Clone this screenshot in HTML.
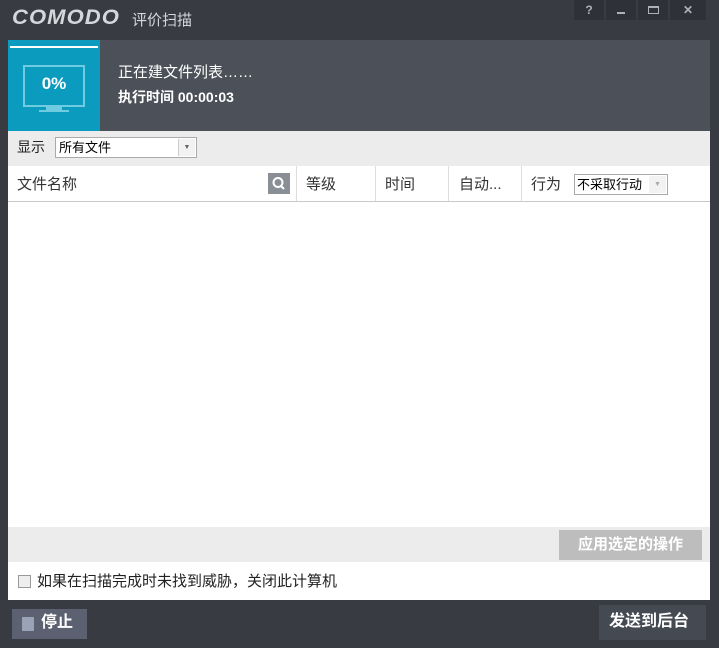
<!DOCTYPE html>
<html><head><meta charset="utf-8"><style>
*{margin:0;padding:0;box-sizing:border-box}
body{width:719px;height:648px;background:#383b42;font-family:"Liberation Sans","Noto Sans CJK SC",sans-serif;position:relative;overflow:hidden}
.a{position:absolute}
.wb{position:absolute;top:0;height:20px;background:#2e3137;color:#aeb1b6;font-size:12px;text-align:center;line-height:20px;font-weight:bold}
</style></head><body>
<div class="a" style="left:12px;top:6px;font-size:21px;font-weight:bold;font-style:italic;color:#d5d7db;letter-spacing:1px;transform:scaleX(1.05);transform-origin:left">COMODO</div>
<div class="a" style="left:132px;top:9px;font-size:15px;color:#d5d7db">评价扫描</div>
<div class="wb" style="left:574px;width:30px">?</div>
<div class="wb" style="left:606px;width:30px"><div style="margin:12px auto 0;width:8px;height:2px;background:#aeb1b6"></div></div>
<div class="wb" style="left:638px;width:30px"><div style="margin:6px auto 0;width:11px;height:8px;border:1px solid #aeb1b6;border-top-width:2px"></div></div>
<div class="wb" style="left:670px;width:36px">✕</div>
<div class="a" style="left:8px;top:40px;width:702px;height:91px;background:#4c5059"></div>
<div class="a" style="left:8px;top:40px;width:92px;height:91px;background:#0a9bbf"></div>
<div class="a" style="left:10px;top:46px;width:88px;height:2px;background:#fff"></div>
<div class="a" style="left:23px;top:65px;width:62px;height:42px;border:2px solid #6ecbe0"></div>
<div class="a" style="left:46px;top:107px;width:16px;height:3px;background:#6ecbe0"></div>
<div class="a" style="left:39px;top:110px;width:30px;height:2px;background:#6ecbe0"></div>
<div class="a" style="left:23px;top:74px;width:62px;text-align:center;color:#fff;font-weight:bold;font-size:17px">0%</div>
<div class="a" style="left:118px;top:61px;color:#fff;font-size:15px">正在建文件列表……</div>
<div class="a" style="left:118px;top:87px;color:#fff;font-size:14px;font-weight:bold">执行时间 00:00:03</div>
<div class="a" style="left:8px;top:131px;width:702px;height:35px;background:#ececec"></div>
<div class="a" style="left:17px;top:137px;font-size:14px;color:#222">显示</div>
<div class="a" style="left:55px;top:137px;width:142px;height:21px;background:#fff;border:1px solid #aaa;font-size:13px;padding:1px 3px;color:#000;line-height:17px">所有文件</div>
<div class="a" style="left:178px;top:139px;width:17px;height:17px;border-left:1px solid #ccc;background:#f2f2f2;font-size:7px;color:#666;text-align:center;line-height:17px">▼</div>
<div class="a" style="left:8px;top:166px;width:702px;height:361px;background:#fff"></div>
<div class="a" style="left:8px;top:201px;width:702px;height:1px;background:#c9c9c9"></div>
<div class="a" style="left:296px;top:166px;width:1px;height:35px;background:#ddd"></div>
<div class="a" style="left:375px;top:166px;width:1px;height:35px;background:#ddd"></div>
<div class="a" style="left:448px;top:166px;width:1px;height:35px;background:#ddd"></div>
<div class="a" style="left:521px;top:166px;width:1px;height:35px;background:#ddd"></div>
<div class="a" style="top:173px;left:17px;font-size:15px;color:#333">文件名称</div>
<div class="a" style="top:173px;left:306px;font-size:15px;color:#333">等级</div>
<div class="a" style="top:173px;left:385px;font-size:15px;color:#333">时间</div>
<div class="a" style="top:173px;left:459px;font-size:15px;color:#333">自动...</div>
<div class="a" style="top:173px;left:531px;font-size:15px;color:#333">行为</div>
<div class="a" style="left:268px;top:173px;width:22px;height:21px;background:#8a8e95">
<svg width="22" height="21"><circle cx="10" cy="9.5" r="4.5" fill="none" stroke="#fff" stroke-width="2"/><path d="M13 13l3 3" stroke="#fff" stroke-width="2"/></svg></div>
<div class="a" style="left:574px;top:174px;width:94px;height:21px;border:1px solid #aaa;background:#fff;font-size:13px;padding:1px 2px;color:#000;line-height:17px">不采取行动</div>
<div class="a" style="left:649px;top:176px;width:17px;height:17px;background:#f2f2f2;font-size:7px;color:#aaa;text-align:center;line-height:17px">▼</div>
<div class="a" style="left:8px;top:527px;width:702px;height:35px;background:#ececec"></div>
<div class="a" style="left:559px;top:530px;width:143px;height:30px;background:#bdbdbd;color:#fff;font-weight:bold;font-size:15px;text-align:center;line-height:30px">应用选定的操作</div>
<div class="a" style="left:8px;top:562px;width:702px;height:38px;background:#fff"></div>
<div class="a" style="left:18px;top:575px;width:13px;height:13px;border:1px solid #999;background:#eee"></div>
<div class="a" style="left:37px;top:570px;font-size:15px;color:#222">如果在扫描完成时未找到威胁，关闭此计算机</div>
<div class="a" style="left:12px;top:609px;width:75px;height:30px;background:#5b6170"></div>
<div class="a" style="left:22px;top:617px;width:12px;height:14px;background:#9aa3b5"></div>
<div class="a" style="left:41px;top:612px;color:#fff;font-weight:bold;font-size:16px;line-height:22px">停止</div>
<div class="a" style="left:599px;top:605px;width:107px;height:35px;background:#454952"></div>
<div class="a" style="left:609px;top:611px;color:#fff;font-weight:bold;font-size:16px;line-height:22px">发送到后台</div>
</body></html>
